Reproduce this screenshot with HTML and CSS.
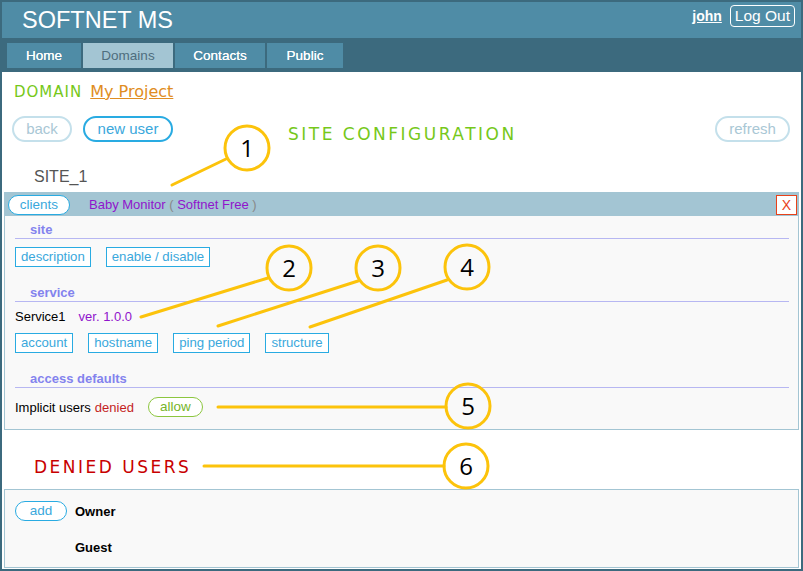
FILE: index.html
```html
<!DOCTYPE html>
<html>
<head>
<meta charset="utf-8">
<title>SOFTNET MS</title>
<link rel="stylesheet" href="styles.css">
</head>
<body>
<div class="frame">
  <header class="topbar">
    <div class="brand">SOFTNET MS</div>
    <div class="account">
      <a class="user" href="#">john</a>
      <span class="logout">Log Out</span>
    </div>
  </header>
  <nav class="tabs">
    <span class="tab">Home</span>
    <span class="tab active">Domains</span>
    <span class="tab">Contacts</span>
    <span class="tab pub">Public</span>
  </nav>

  <div class="domain-row">
    <span class="domain-label">DOMAIN</span>
    <a class="domain-name" href="#">My Project</a>
  </div>

  <div class="action-row">
    <span class="pill faded">back</span>
    <span class="pill blue">new user</span>
    <span class="page-title">SITE CONFIGURATION</span>
    <span class="pill faded refresh">refresh</span>
  </div>

  <div class="site-name">SITE_1</div>

  <div class="panel site-panel">
    <div class="panel-head">
      <span class="pill-sm">clients</span>
      <span class="app">Baby Monitor <span class="paren">(</span> Softnet Free <span class="paren">)</span></span>
      <span class="close">X</span>
    </div>
    <div class="sec-title">site</div>
    <div class="btn-row">
      <span class="sq">description</span>
      <span class="sq">enable / disable</span>
    </div>
    <div class="sec-title gap">service</div>
    <div class="info-row">
      <span>Service1</span>
      <span class="ver">ver. 1.0.0</span>
    </div>
    <div class="btn-row">
      <span class="sq">account</span>
      <span class="sq">hostname</span>
      <span class="sq">ping period</span>
      <span class="sq">structure</span>
    </div>
    <div class="sec-title gap">access defaults</div>
    <div class="access-row">
      <span>Implicit users</span>
      <span class="denied">denied</span>
      <span class="pill-sm green">allow</span>
    </div>
  </div>

  <div class="denied-title">DENIED USERS</div>

  <div class="panel users-panel">
    <div class="users-grid">
      <span class="pill-sm add">add</span>
      <span class="uname">Owner</span>
      <span></span>
      <span class="uname">Guest</span>
    </div>
  </div>

  <svg class="callouts" width="803" height="571" viewBox="0 0 803 571">
    <g stroke="#fcc30b" stroke-width="3" fill="none" stroke-linecap="round">
      <line x1="172" y1="185" x2="226" y2="159"/>
      <circle cx="247" cy="148" r="22"/>
      <line x1="141" y1="317" x2="268" y2="278"/>
      <circle cx="289" cy="268" r="22"/>
      <line x1="218" y1="326" x2="358" y2="281"/>
      <circle cx="378" cy="268" r="22"/>
      <line x1="310" y1="327" x2="447" y2="280"/>
      <circle cx="467" cy="267" r="22"/>
      <line x1="218" y1="407" x2="446" y2="407"/>
      <circle cx="468" cy="406" r="22"/>
      <line x1="204" y1="466" x2="444" y2="466"/>
      <circle cx="466" cy="466" r="22"/>
    </g>
    <g class="num" fill="#000" text-anchor="middle">
      <text x="247" y="157">1</text>
      <text x="289" y="277">2</text>
      <text x="378" y="277">3</text>
      <text x="467" y="276">4</text>
      <text x="468" y="415">5</text>
      <text x="466" y="475">6</text>
    </g>
  </svg>
</div>
</body>
</html>
```

FILE: styles.css
```css
* { box-sizing: border-box; }
html, body { margin: 0; padding: 0; }
body {
  font-family: "Liberation Sans", Arial, sans-serif;
  font-size: 13px;
  color: #000;
  background: #fff;
}
.frame {
  position: relative;
  width: 803px;
  height: 571px;
  border: 2px solid #3c6a7e;
  overflow: hidden;
  background: #fff;
}
.topbar {
  display: flex;
  align-items: flex-start;
  height: 36px;
  background: #4f8ca6;
  padding: 0 6px 0 20px;
}
.brand {
  color: #fff;
  font-size: 23.5px;
  line-height: 36px;
}
.account {
  margin-left: auto;
  display: flex;
  align-items: center;
  gap: 8px;
  padding-top: 3px;
}
.user {
  color: #fff;
  font-weight: bold;
  font-size: 14px;
  text-decoration: underline;
}
.logout {
  color: #fff;
  font-size: 15.5px;
  line-height: 20px;
  border: 1px solid #fff;
  border-radius: 4px;
  padding: 0 4px;
  white-space: nowrap;
}
.tabs {
  display: flex;
  gap: 2px;
  height: 34px;
  background: #3c6a7e;
  padding: 5px 0 0 5px;
}
.tab {
  height: 25px;
  line-height: 25px;
  width: 74px;
  text-align: center;
  background: #4f8ca6;
  color: #fff;
  font-size: 13.5px;
  text-shadow: 0 0 0.4px #fff;
}
.tab.active {
  width: 90px;
  background: #a3c5d3;
  color: #4e6e7e;
  text-shadow: none;
}
.tab:nth-child(3) { width: 90px; }
.tab.pub { width: 76px; }

.domain-row {
  margin-top: 10px;
  padding-left: 12px;
  height: 20px;
  line-height: 20px;
  display: flex;
  align-items: baseline;
  gap: 8px;
}
.domain-label {
  font-family: "DejaVu Sans", Verdana, sans-serif;
  font-size: 15px;
  letter-spacing: 1px;
  color: #76c81a;
}
.domain-name {
  font-family: "DejaVu Sans", Verdana, sans-serif;
  font-size: 16px;
  color: #e08d22;
  text-decoration: underline;
}

.action-row {
  display: flex;
  align-items: flex-start;
  height: 26px;
  margin-top: 14px;
  padding: 0 11px 0 10px;
}
.pill {
  height: 26px;
  line-height: 22px;
  border: 2px solid #29abe2;
  border-radius: 13px;
  padding: 0 12px;
  font-size: 15px;
  color: #3aa8dc;
  background: #fff;
}
.pill.faded {
  border-color: #c4e0eb;
  color: #a9c7d5;
  width: 60px;
  text-align: center;
  padding: 0;
}
.pill.blue {
  margin-left: 11px;
  width: 90px;
  text-align: center;
  padding: 0;
}
.pill.refresh {
  margin-left: auto;
  width: 75px;
}
.page-title {
  margin-left: 115px;
  padding-top: 8px;
  line-height: 20px;
  font-family: "DejaVu Sans", Verdana, sans-serif;
  font-size: 17px;
  letter-spacing: 2.5px;
  color: #76c81a;
}

.site-name {
  margin-top: 25px;
  padding-left: 32px;
  line-height: 20px;
  height: 20px;
  font-size: 16px;
  color: #555;
}

.panel {
  margin: 0 2px;
  background: #f9f9f9;
  border: 1px solid #a3c5d3;
}
.site-panel {
  margin-top: 5px;
  height: 238px;
  padding: 0 9px 11px 10px;
}
.panel-head {
  display: flex;
  align-items: center;
  height: 23px;
  margin: 0 -9px 0 -10px;
  padding: 0 1px 0 3px;
  background: #a3c5d3;
}
.pill-sm {
  height: 20px;
  line-height: 18px;
  border: 1px solid #29abe2;
  border-radius: 10px;
  background: #fff;
  color: #3aa8dc;
  font-size: 13.5px;
  text-align: center;
}
.panel-head .pill-sm { width: 62px; margin-top: 1px; }
.app {
  margin-left: 19px;
  color: #9014cc;
  font-size: 13px;
}
.paren { color: #888; }
.close {
  margin-left: auto;
  width: 21px;
  height: 20px;
  margin-top: 1px;
  line-height: 18px;
  text-align: center;
  border: 1px solid #e8421a;
  background: #fff;
  color: #e8421a;
  font-size: 14px;
}
.sec-title {
  margin-top: 6px;
  height: 17px;
  line-height: 16px;
  padding-left: 15px;
  border-bottom: 1px solid #b7b7f2;
  color: #8383ee;
  font-weight: bold;
  font-size: 13px;
}
.sec-title.gap { margin-top: 18px; }
.btn-row {
  display: flex;
  gap: 15px;
  margin-top: 8px;
}
.sq {
  height: 20px;
  line-height: 18px;
  border: 1px solid #29abe2;
  padding: 0 5px;
  color: #3aa8dc;
  font-size: 13.2px;
  background: #fff;
}
.info-row {
  margin-top: 7px;
  line-height: 16px;
  display: flex;
  gap: 13px;
}
.ver { color: #9014cc; }
.access-row {
  margin-top: 9px;
  display: flex;
  align-items: center;
  height: 20px;
}
.denied { color: #c41e1e; margin-left: 4px; }
.pill-sm.green {
  margin-left: 14px;
  width: 55px;
  border-color: #8cc63f;
  color: #77b52a;
  background: #fff;
}

.denied-title {
  margin-top: 27px;
  padding-left: 32px;
  line-height: 20px;
  height: 20px;
  font-family: "DejaVu Sans", Verdana, sans-serif;
  font-size: 17px;
  letter-spacing: 2.5px;
  color: #c80000;
}
.users-panel {
  margin-top: 12px;
  height: 79px;
  padding: 11px 10px 8px 10px;
}
.users-grid {
  display: grid;
  grid-template-columns: 52px auto;
  grid-template-rows: 20px 20px;
  row-gap: 16px;
  column-gap: 8px;
  align-items: center;
}
.pill-sm.add { width: 52px; }
.uname { font-weight: bold; font-size: 13px; }

.callouts {
  position: absolute;
  left: -2px;
  top: -2px;
  pointer-events: none;
}
.num text {
  font-family: "Open Sans", "Liberation Sans", sans-serif;
  font-size: 24px;
}
```
